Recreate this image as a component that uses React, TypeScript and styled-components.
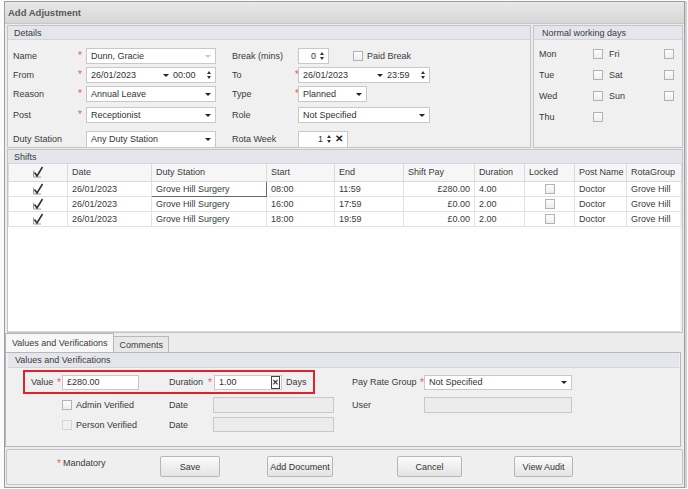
import React from "react";
import styled, { createGlobalStyle } from "styled-components";

const GlobalStyle = createGlobalStyle`
  html, body { margin: 0; padding: 0; background: #fbfbfb; }
  body { font-family: "Liberation Sans", Arial, sans-serif; font-size: 9px; color: #333; }
  * { box-sizing: border-box; }
`;

const Page = styled.div`
  width: 688px;
  height: 489px;
  padding: 1px 0 0 4px;
`;

const Dialog = styled.div`
  width: 681px;
  height: 487px;
  border: 1px solid #9e9e9e;
  box-shadow: 2px 0 0 #d2d2d2;
  background: #ececec;
  display: flex;
  flex-direction: column;
`;

const TitleBar = styled.div`
  height: 22px;
  flex: none;
  padding-left: 3px;
  display: flex;
  align-items: center;
  background: linear-gradient(#e8e8e8, #d6d6d6);
  border-bottom: 1px solid #c6c6c6;
  font-size: 9.5px;
  font-weight: bold;
  color: #595959;
`;

const TopRow = styled.div`
  display: flex;
  gap: 2px;
  height: 123px;
  margin: 1px 1px 0 2px;
`;

const Group = styled.div<{ $w?: number }>`
  ${(p) => (p.$w ? `width: ${p.$w}px; flex: none;` : "flex: 1;")}
  border: 1px solid #c4c4c4;
  background: #f0f0f0;
  display: flex;
  flex-direction: column;
`;

const GroupHeader = styled.div<{ $pl?: number }>`
  height: 14px;
  flex: none;
  padding-left: ${(p) => p.$pl ?? 6}px;
  line-height: 14px;
  background: #e4e6ec;
  border-bottom: 1px solid #d3d5db;
  color: #3a3a3a;
`;

const DetailsGrid = styled.div`
  display: grid;
  grid-template-columns: 65px 8px 146px 63px 3px auto;
  grid-template-rows: 19px 19px 21px 24px 17px;
  padding: 8px 0 0 5px;
`;

const Label = styled.span`
  height: 16px;
  line-height: 16px;
  white-space: nowrap;
  color: #3a3a3a;
`;

const Star = styled.span`
  height: 16px;
  line-height: 16px;
  color: #e45a5a;
  font-size: 10px;
`;

const Cell = styled.div`
  display: flex;
  align-items: center;
  height: 16px;
`;

const Field = styled.div<{ $w: number; $h?: number; $disabled?: boolean }>`
  width: ${(p) => p.$w}px;
  height: ${(p) => p.$h ?? 16}px;
  flex: none;
  border: 1px solid #c8c8c8;
  background: ${(p) => (p.$disabled ? "#ececec" : "#fff")};
  display: flex;
  align-items: center;
  gap: 4px;
  padding: 0 4px;
  color: #333;
`;

const FieldText = styled.span<{ $right?: boolean }>`
  flex: 1;
  white-space: nowrap;
  overflow: hidden;
  text-align: ${(p) => (p.$right ? "right" : "left")};
`;

const TimeText = styled.span`
  width: 30px;
  flex: none;
  white-space: nowrap;
`;

const Caret = styled.span<{ $faded?: boolean }>`
  flex: none;
  width: 0;
  height: 0;
  border-left: 3px solid transparent;
  border-right: 3px solid transparent;
  border-top: 3px solid ${(p) => (p.$faded ? "#c8c8c8" : "#222")};
`;

const SpinWrap = styled.span`
  flex: none;
  display: flex;
  flex-direction: column;
  gap: 2px;
`;

const Tri = styled.span<{ $up?: boolean }>`
  width: 0;
  height: 0;
  border-left: 2.5px solid transparent;
  border-right: 2.5px solid transparent;
  ${(p) => (p.$up ? "border-bottom" : "border-top")}: 3px solid #333;
`;

const Clear = styled.span`
  flex: none;
  font-size: 10px;
  font-weight: bold;
  color: #222;
  line-height: 10px;
`;

const ClearBtn = styled.span`
  flex: none;
  width: 9px;
  height: 13px;
  border: 1px solid #444;
  display: flex;
  align-items: center;
  justify-content: center;
  font-size: 8px;
  font-weight: bold;
  margin-right: -3px;
`;

const CheckBox = styled.span<{ $disabled?: boolean }>`
  flex: none;
  width: 10px;
  height: 10px;
  border: 1px solid ${(p) => (p.$disabled ? "#d6d6d6" : "#b2b2b2")};
  background: ${(p) => (p.$disabled ? "#f0f0f0" : "linear-gradient(#fdfdfd, #eeeeee)")};
  display: inline-block;
`;

const CheckLabel = styled.label<{ $ml?: number }>`
  display: flex;
  align-items: center;
  gap: 4px;
  margin-left: ${(p) => p.$ml ?? 0}px;
  color: #3a3a3a;
  white-space: nowrap;
`;

const DaysGrid = styled.div`
  display: grid;
  grid-template-columns: 54px 10px 6px 55px 10px;
  grid-auto-rows: 21px;
  align-items: center;
  padding: 3px 0 0 5px;
  color: #3a3a3a;
`;

const ShiftsGroup = styled(Group)`
  flex: none;
  height: 184px;
  margin: 1px 1px 0 2px;
`;

const GridArea = styled.div`
  flex: 1;
  background: #fff;
  margin-right: 2px;
  border-bottom: 1px solid #dadada;
`;

const Table = styled.table`
  border-collapse: collapse;
  table-layout: fixed;
  width: 673px;
`;

const Th = styled.th`
  height: 17px;
  padding: 0 4px;
  font-weight: normal;
  text-align: left;
  background: #f6f6f6;
  border: 1px solid #dadada;
  border-top: none;
  color: #3a3a3a;
  white-space: nowrap;
`;

const Td = styled.td<{ $align?: string; $focus?: boolean }>`
  height: 15px;
  padding: 0 4px;
  text-align: ${(p) => p.$align ?? "left"};
  border: 1px solid ${(p) => (p.$focus ? "#6a6a6a" : "#e2e2e2")};
  color: #3a3a3a;
  white-space: nowrap;
  overflow: hidden;
`;

const CenterBox = styled.div`
  display: flex;
  justify-content: center;
  align-items: center;
`;

const TabRow = styled.div`
  display: flex;
  align-items: flex-end;
  height: 19px;
  flex: none;
  margin-right: 4px;
`;

const Tab = styled.div<{ $active?: boolean }>`
  height: ${(p) => (p.$active ? 19 : 16)}px;
  padding: 0 ${(p) => (p.$active ? 6 : 5)}px;
  line-height: ${(p) => (p.$active ? 18 : 16)}px;
  background: ${(p) => (p.$active ? "#f7f7f7" : "#e8e8e8")};
  border: 1px solid #b8b8b8;
  border-bottom: none;
  ${(p) => (p.$active ? "" : "border-left: none;")}
  color: #3a3a3a;
  white-space: nowrap;
`;

const Panel = styled.div`
  height: 95px;
  flex: none;
  margin-right: 3px;
  border: 1px solid #b8b8b8;
  background: #f0f0f0;
  display: flex;
  flex-direction: column;
`;

const PanelHeader = styled(GroupHeader)`
  height: 15px;
  line-height: 15px;
  margin: 0 1px 0 2px;
  padding-left: 7px;
`;

const ValueRow = styled.div`
  display: flex;
  align-items: center;
  margin-top: 2px;
`;

const Highlight = styled.div`
  display: flex;
  align-items: center;
  height: 24px;
  margin-left: 17px;
  padding: 0 3px 0 6px;
  border: 2px solid #e0232b;
`;

const InlineLabel = styled.span<{ $w: number; $ml?: number }>`
  width: ${(p) => p.$w}px;
  margin-left: ${(p) => p.$ml ?? 0}px;
  flex: none;
  color: #3a3a3a;
  white-space: nowrap;
`;

const InlineStar = styled.span<{ $w: number }>`
  width: ${(p) => p.$w}px;
  flex: none;
  color: #e45a5a;
  font-size: 10px;
`;

const VerifyGrid = styled.div`
  display: grid;
  grid-template-columns: 107px 44px 121px 18px 72px 148px;
  grid-template-rows: 16px 15px;
  row-gap: 4px;
  align-items: center;
  margin: 3px 0 0 56px;
  color: #3a3a3a;
`;

const Footer = styled.div`
  height: 36px;
  flex: none;
  margin: 2px 1px 0 1px;
  border: 1px solid #c4c4c4;
  border-radius: 2px;
  background: #efefef;
  display: flex;
  align-items: flex-start;
  padding: 6px 0 0 50px;
`;

const Mandatory = styled.span`
  width: 103px;
  flex: none;
  display: flex;
  align-items: center;
  height: 14px;
  color: #3a3a3a;
`;

const Button = styled.button<{ $w: number; $ml?: number }>`
  width: ${(p) => p.$w}px;
  margin-left: ${(p) => p.$ml ?? 0}px;
  height: 21px;
  flex: none;
  padding: 0;
  font-family: inherit;
  font-size: 9px;
  color: #333;
  background: linear-gradient(#fbfbfb, #e4e4e4);
  border: 1px solid #b6b6b6;
  border-radius: 2px;
`;

function Spin() {
  return (
    <SpinWrap>
      <Tri $up />
      <Tri />
    </SpinWrap>
  );
}

function Tick() {
  return (
    <svg width="12" height="12" viewBox="0 0 12 12">
      <path d="M1.5 4.5 V11 H9" fill="none" stroke="#9a9a9a" strokeWidth="1" />
      <path d="M2.5 6.5 L5 10 L10.5 1" fill="none" stroke="#333" strokeWidth="1.6" />
    </svg>
  );
}

const shifts = [
  { start: "08:00", end: "11:59", pay: "£280.00", dur: "4.00" },
  { start: "16:00", end: "17:59", pay: "£0.00", dur: "2.00" },
  { start: "18:00", end: "19:59", pay: "£0.00", dur: "2.00" },
];

const colWidths = [59, 84, 115, 68, 69, 71, 50, 50, 52, 55];

export default function App() {
  return (
    <Page>
      <GlobalStyle />
      <Dialog>
        <TitleBar>Add Adjustment</TitleBar>

        <TopRow>
          <Group $w={524}>
            <GroupHeader>Details</GroupHeader>
            <DetailsGrid>
              <Label>Name</Label>
              <Star>*</Star>
              <Cell>
                <Field $w={130}>
                  <FieldText>Dunn, Gracie</FieldText>
                  <Caret $faded />
                </Field>
              </Cell>
              <Label>Break (mins)</Label>
              <span />
              <Cell>
                <Field $w={31}>
                  <FieldText $right>0</FieldText>
                  <Spin />
                </Field>
                <CheckLabel $ml={24}>
                  <CheckBox />
                  Paid Break
                </CheckLabel>
              </Cell>

              <Label>From</Label>
              <Star>*</Star>
              <Cell>
                <Field $w={130}>
                  <FieldText>26/01/2023</FieldText>
                  <Caret />
                  <TimeText>00:00</TimeText>
                  <Spin />
                </Field>
              </Cell>
              <Label>To</Label>
              <Star>*</Star>
              <Cell>
                <Field $w={132}>
                  <FieldText>26/01/2023</FieldText>
                  <Caret />
                  <TimeText>23:59</TimeText>
                  <Spin />
                </Field>
              </Cell>

              <Label>Reason</Label>
              <Star>*</Star>
              <Cell>
                <Field $w={130}>
                  <FieldText>Annual Leave</FieldText>
                  <Caret />
                </Field>
              </Cell>
              <Label>Type</Label>
              <Star>*</Star>
              <Cell>
                <Field $w={69}>
                  <FieldText>Planned</FieldText>
                  <Caret />
                </Field>
              </Cell>

              <Label>Post</Label>
              <Star>*</Star>
              <Cell>
                <Field $w={130}>
                  <FieldText>Receptionist</FieldText>
                  <Caret />
                </Field>
              </Cell>
              <Label>Role</Label>
              <span />
              <Cell>
                <Field $w={132}>
                  <FieldText>Not Specified</FieldText>
                  <Caret />
                </Field>
              </Cell>

              <Label>Duty Station</Label>
              <span />
              <Cell>
                <Field $w={130} $h={17}>
                  <FieldText>Any Duty Station</FieldText>
                  <Caret />
                </Field>
              </Cell>
              <Label>Rota Week</Label>
              <span />
              <Cell>
                <Field $w={50} $h={17}>
                  <FieldText $right>1</FieldText>
                  <Spin />
                  <Clear>✕</Clear>
                </Field>
              </Cell>
            </DetailsGrid>
          </Group>

          <Group>
            <GroupHeader $pl={8}>Normal working days</GroupHeader>
            <DaysGrid>
              <span>Mon</span>
              <CheckBox />
              <span />
              <span>Fri</span>
              <CheckBox />
              <span>Tue</span>
              <CheckBox />
              <span />
              <span>Sat</span>
              <CheckBox />
              <span>Wed</span>
              <CheckBox />
              <span />
              <span>Sun</span>
              <CheckBox />
              <span>Thu</span>
              <CheckBox />
            </DaysGrid>
          </Group>
        </TopRow>

        <ShiftsGroup>
          <GroupHeader>Shifts</GroupHeader>
          <GridArea>
            <Table>
              <colgroup>
                {colWidths.map((w, i) => (
                  <col key={i} style={{ width: w }} />
                ))}
              </colgroup>
              <thead>
                <tr>
                  <Th>
                    <CenterBox>
                      <Tick />
                    </CenterBox>
                  </Th>
                  <Th>Date</Th>
                  <Th>Duty Station</Th>
                  <Th>Start</Th>
                  <Th>End</Th>
                  <Th>Shift Pay</Th>
                  <Th>Duration</Th>
                  <Th>Locked</Th>
                  <Th>Post Name</Th>
                  <Th>RotaGroup</Th>
                </tr>
              </thead>
              <tbody>
                {shifts.map((s, i) => (
                  <tr key={i}>
                    <Td>
                      <CenterBox>
                        <Tick />
                      </CenterBox>
                    </Td>
                    <Td>26/01/2023</Td>
                    <Td $focus={i === 0}>Grove Hill Surgery</Td>
                    <Td>{s.start}</Td>
                    <Td>{s.end}</Td>
                    <Td $align="right">{s.pay}</Td>
                    <Td>{s.dur}</Td>
                    <Td>
                      <CenterBox>
                        <CheckBox />
                      </CenterBox>
                    </Td>
                    <Td>Doctor</Td>
                    <Td>Grove Hill</Td>
                  </tr>
                ))}
              </tbody>
            </Table>
          </GridArea>
        </ShiftsGroup>

        <TabRow>
          <Tab $active>Values and Verifications</Tab>
          <Tab>Comments</Tab>
        </TabRow>

        <Panel>
          <PanelHeader>Values and Verifications</PanelHeader>
          <ValueRow>
            <Highlight>
              <InlineLabel $w={26}>Value</InlineLabel>
              <InlineStar $w={5}>*</InlineStar>
              <Field $w={77} $h={15}>
                <FieldText>£280.00</FieldText>
              </Field>
              <InlineLabel $w={39} $ml={30}>
                Duration
              </InlineLabel>
              <InlineStar $w={6}>*</InlineStar>
              <Field $w={68} $h={15}>
                <FieldText>1.00</FieldText>
                <ClearBtn>✕</ClearBtn>
              </Field>
              <InlineLabel $w={24} $ml={4}>
                Days
              </InlineLabel>
            </Highlight>
            <InlineLabel $w={68} $ml={37}>
              Pay Rate Group
            </InlineLabel>
            <InlineStar $w={4}>*</InlineStar>
            <Field $w={148} $h={15}>
              <FieldText>Not Specified</FieldText>
              <Caret />
            </Field>
          </ValueRow>

          <VerifyGrid>
            <CheckLabel>
              <CheckBox />
              Admin Verified
            </CheckLabel>
            <span>Date</span>
            <Field $w={121} $disabled />
            <span />
            <span>User</span>
            <Field $w={148} $disabled />

            <CheckLabel>
              <CheckBox $disabled />
              Person Verified
            </CheckLabel>
            <span>Date</span>
            <Field $w={121} $h={15} $disabled />
          </VerifyGrid>
        </Panel>

        <Footer>
          <Mandatory>
            <InlineStar $w={6}>*</InlineStar>
            Mandatory
          </Mandatory>
          <Button $w={60}>Save</Button>
          <Button $w={66} $ml={47}>
            Add Document
          </Button>
          <Button $w={65} $ml={64}>
            Cancel
          </Button>
          <Button $w={59} $ml={52}>
            View Audit
          </Button>
        </Footer>
      </Dialog>
    </Page>
  );
}
